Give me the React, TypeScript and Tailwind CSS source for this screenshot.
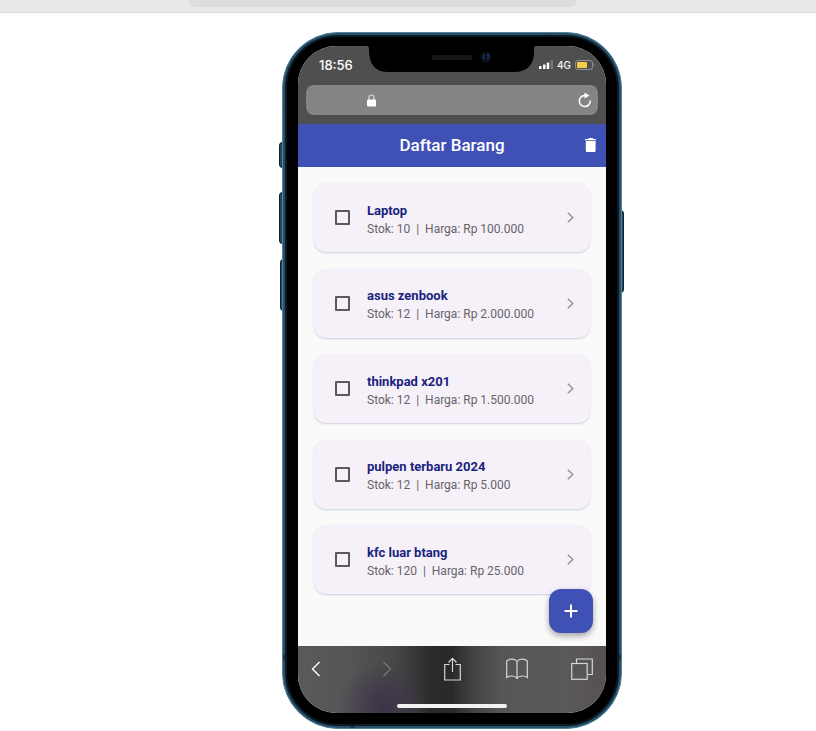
import React from 'react';

type Item = { name: string; stock: string; price: string };

const items: Item[] = [
  { name: 'Laptop', stock: '10', price: '100.000' },
  { name: 'asus zenbook', stock: '12', price: '2.000.000' },
  { name: 'thinkpad x201', stock: '12', price: '1.500.000' },
  { name: 'pulpen terbaru 2024', stock: '12', price: '5.000' },
  { name: 'kfc luar btang', stock: '120', price: '25.000' },
];

function SideButtons() {
  const key = 'absolute w-[4px] border-y border-[#0c2434] bg-[#24485e]';
  return (
    <>
      <span className={`${key} -left-[3px] top-[110px] h-[26px] rounded-l-sm border-l`} />
      <span className={`${key} -left-[3px] top-[160px] h-[52px] rounded-l-sm border-l`} />
      <span className={`${key} -left-[2px] top-[227px] h-[52px] rounded-l-sm border-l`} />
      <span className={`${key} -right-[2px] top-[178px] h-[83px] rounded-r-sm border-r`} />
    </>
  );
}

function AntennaBands() {
  return (
    <>
      <span className="absolute left-0 top-[70px] h-[4px] w-[4px] bg-[#3a454c]" />
      <span className="absolute right-0 top-[70px] h-[4px] w-[4px] bg-[#3a454c]" />
      <span className="absolute bottom-[68px] left-0 h-[5px] w-[4px] bg-[#273238]" />
      <span className="absolute bottom-[68px] right-0 h-[5px] w-[4px] bg-[#273238]" />
      <span className="absolute right-[69px] top-0 h-[3px] w-[5px] bg-[#3a454c]" />
      <span className="absolute bottom-0 left-[67px] h-[3px] w-[5px] bg-[#273238]" />
    </>
  );
}

function Notch() {
  return (
    <svg
      className="absolute left-1/2 top-[12px] -translate-x-1/2"
      width="174"
      height="28"
      viewBox="0 0 174 28"
      aria-hidden="true"
    >
      <path d="M0 0H174V1C169 1 169 1 169 6V7C169 19 163 27 149 27H22C10 27 4 18 4 6C4 1 4 1 0 1Z" fill="#000" />
      <rect x="67" y="10" width="40" height="5" rx="2.5" fill="#151617" />
      <circle cx="121" cy="12" r="5.5" fill="#0b1019" />
      <path d="M120 10C117.500 10.500 118 14 119.500 14M122 10H123.500V12.500L122 14" fill="none" stroke="#123b75" strokeWidth="1.300" />
    </svg>
  );
}

function StatusBar() {
  return (
    <div className="flex h-[39px] items-center justify-between pb-[2px] pl-[21px] pr-[11px] text-white">
      <span className="font-['Inter','Liberation_Sans',sans-serif] text-[13px] font-medium leading-4">18:56</span>
      <div className="flex items-center gap-[4px]">
        <svg width="14" height="9" viewBox="0 0 14 9" aria-hidden="true">
          <rect x="0" y="6" width="2.500" height="3" rx=".6" fill="#fff" />
          <rect x="4" y="4.500" width="2.500" height="4.500" rx=".6" fill="#fff" />
          <rect x="7.700" y="2.500" width="2.500" height="6.500" rx=".6" fill="#fff" />
          <rect x="11.500" y="0" width="2.500" height="9" rx=".6" fill="#777" />
        </svg>
        <span className="font-['Inter','Liberation_Sans',sans-serif] text-[10px] font-medium leading-4">4G</span>
        <svg width="20" height="10" viewBox="0 0 20 10" aria-hidden="true">
          <rect x=".5" y=".5" width="17" height="9" rx="2.500" fill="none" stroke="#929292" />
          <rect x="2" y="2" width="10" height="6" rx="1" fill="#f7cf45" />
          <path d="M18.700 3.500Q20.500 5 18.700 6.500Z" fill="#929292" />
        </svg>
      </div>
    </div>
  );
}

function AddressBar() {
  return (
    <div className="mx-2 flex h-[30px] items-center justify-between rounded-[8px] bg-[#848484] pl-[61px] pr-[6px]">
      <svg width="9" height="13" viewBox="0 0 9 13" aria-hidden="true">
        <path d="M2 6V3.500a2.500 2.500 0 0 1 5 0V6" fill="none" stroke="#ddd" strokeWidth="1.200" />
        <rect x="0" y="5.500" width="9" height="7" rx="1" fill="#fff" />
      </svg>
      <button type="button" aria-label="Reload">
        <svg className="block" width="14" height="16" viewBox="0 0 14 16">
          <path d="M8 3.500H6.500A5.500 5.500 0 1 0 12.300 9" fill="none" stroke="#fff" strokeWidth="1.500" strokeLinecap="round" />
          <path d="M6.500.5 11.500 3.600 6.500 6.500Z" fill="#fff" />
        </svg>
      </button>
    </div>
  );
}

function AppBar() {
  return (
    <header className="grid h-[43px] shrink-0 grid-cols-[1fr_auto_1fr] items-center bg-[#4051b5] px-[10px] pb-[2px] text-white">
      <h1 className="col-start-2 text-[17px] font-medium leading-6">Daftar Barang</h1>
      <button type="button" aria-label="Hapus" className="justify-self-end">
        <svg className="block" width="11" height="14" viewBox="0 0 11 14" fill="currentColor">
          <path d="M0 1H3L4 0H7.500L8.500 1H11V2.300H0ZM.8 3H10.600V12.800Q10.600 14 9.400 14H2Q.8 14 .8 12.800Z" />
        </svg>
      </button>
    </header>
  );
}

function ItemCard({ item }: { item: Item }) {
  return (
    <li className="flex h-[69px] items-center rounded-[12px] bg-[#f6f1f9] pl-[21px] pr-[16px] shadow-[0_1px_2px_rgba(40,60,120,0.22)]">
      <label className="flex min-w-0 flex-1 items-center">
        <input
          type="checkbox"
          className="h-[15px] w-[15px] shrink-0 appearance-none rounded-[1px] border-2 border-[#5c5862] checked:bg-[#4051b5]"
        />
        <span className="ml-[17px] flex flex-col pt-[4px]">
          <span className="text-[13px] font-bold leading-[18px] text-[#1a237e]">{item.name}</span>
          <span className="whitespace-pre text-[12px] leading-[18px] text-[#666469]">
            {`Stok: ${item.stock}  |  Harga: Rp ${item.price}`}
          </span>
        </span>
      </label>
      <svg width="7" height="11" viewBox="0 0 7 11" fill="none" stroke="#929095" strokeWidth="1.400" aria-hidden="true">
        <path d="M.8.7 5.800 5.500.8 10.300" />
      </svg>
    </li>
  );
}

function Toolbar() {
  return (
    <nav className="flex h-[67px] shrink-0 flex-col justify-between bg-[radial-gradient(ellipse_46px_44px_at_86px_60px,#3d334a_0%,#3d334a00_100%),linear-gradient(90deg,#5a5a5a_0%,#555_16%,#474747_32%,#2b2b2b_43%,#292929_50%,#434343_57%,#565656_66%,#595959_88%,#575150_100%)] pb-[5px] pt-[10px]">
      <div className="flex h-[25px] items-center justify-between px-[13px]">
        <button type="button" aria-label="Back" className="w-[22px]">
          <svg className="block" width="10" height="16" viewBox="0 0 10 16" fill="none" stroke="#fff" strokeWidth="1.400">
            <path d="M8.500 1 1.500 8 8.500 15" />
          </svg>
        </button>
        <button type="button" aria-label="Forward" className="flex w-[22px] justify-center">
          <svg className="block" width="10" height="16" viewBox="0 0 10 16" fill="none" stroke="#777" strokeWidth="1.300">
            <path d="M1.500 1 8.500 8 1.500 15" />
          </svg>
        </button>
        <button type="button" aria-label="Share" className="flex w-[22px] justify-center">
          <svg className="block" width="17" height="24" viewBox="0 0 17 24" fill="none" stroke="#d6d6d6" strokeWidth="1.200">
            <path d="M5.500 7.500H.7V23H16.300V7.500H11.500M8.500 15V1.500M4.500 5.500 8.500 1.300 12.500 5.500" />
          </svg>
        </button>
        <button type="button" aria-label="Bookmarks" className="w-[22px]">
          <svg className="block" width="22" height="22" viewBox="0 0 22 22" fill="none" stroke="#d6d6d6" strokeWidth="1.200">
            <path d="M11 3.500C9 .6 3.500.4.700 3V19.500C3.500 17.500 8.500 17.300 11 20.300C13.500 17.300 18.500 17.500 21.300 19.500V3C18.500.4 13 .6 11 3.500ZM11 3.500V20.300" />
          </svg>
        </button>
        <button type="button" aria-label="Tabs" className="w-[22px]">
          <svg className="block" width="22" height="22" viewBox="0 0 22 22" fill="none" stroke="#d6d6d6" strokeWidth="1.200">
            <rect x=".7" y="5.500" width="15.500" height="15.800" />
            <path d="M5.500 5.500V1H21.300V16.500H16.200" />
          </svg>
        </button>
      </div>
      <div className="mx-auto h-[4px] w-[110px] rounded-full bg-[#f2f2f2]" />
    </nav>
  );
}

function Phone() {
  return (
    <div className="relative w-[340px]">
      <SideButtons />
      <div className="relative overflow-hidden rounded-[56px] border border-[#55809a] bg-[#255069] p-[2px]">
        <AntennaBands />
        <div className="relative rounded-[53px] border-[2px] border-[#0c1a24] bg-black px-[11px] pb-[11px] pt-[9px]">
          <div className="flex h-[667px] flex-col overflow-hidden rounded-[38px] bg-[#fafafa]">
            <div className="h-[78px] shrink-0 bg-[#4f4f4f]">
              <StatusBar />
              <AddressBar />
            </div>
            <AppBar />
            <main className="relative flex min-h-0 flex-1 flex-col px-4 pb-[52px] pt-4">
              <ul className="flex flex-1 flex-col justify-between">
                {items.map((item) => (
                  <ItemCard key={item.name} item={item} />
                ))}
              </ul>
              <button
                type="button"
                aria-label="Tambah"
                className="absolute bottom-[13px] right-[13px] flex h-11 w-11 items-center justify-center rounded-[12px] bg-[#4051b5] shadow-[0_3px_6px_rgba(0,0,0,0.35)]"
              >
                <svg width="14" height="14" viewBox="0 0 14 14" stroke="#fff" strokeWidth="2">
                  <path d="M7 .5V13.500M.5 7H13.500" />
                </svg>
              </button>
            </main>
            <Toolbar />
          </div>
        </div>
        <Notch />
      </div>
    </div>
  );
}

export default function App() {
  return (
    <div className="min-h-screen bg-white font-['Roboto','Liberation_Sans',sans-serif]">
      <div className="h-[13px] border-b border-[#d9d9d9] bg-[#e9e9eb] pr-[51px]">
        <div className="mx-auto h-[7px] w-[387px] rounded-b-[5px] bg-[#dddddf]" />
      </div>
      <div className="flex justify-center pl-[88px] pt-[19px]">
        <Phone />
      </div>
    </div>
  );
}
